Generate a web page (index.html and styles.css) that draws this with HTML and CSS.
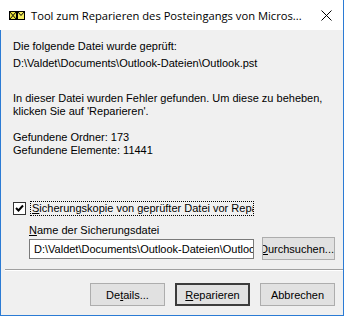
FILE: index.html
```html
<!DOCTYPE html>
<html lang="de">
<head>
<meta charset="utf-8">
<title>Tool zum Reparieren des Posteingangs</title>
<link rel="stylesheet" href="styles.css">
</head>
<body>
<div class="window">
  <div class="titlebar">
    <svg class="app-icon" width="16" height="10" viewBox="0 0 16 10">
      <rect x="0.5" y="0.5" width="7" height="8" fill="#e8e040" stroke="#000"/>
      <path d="M0.5 0.5 L4 4.5 L7.5 0.5 M0.5 8.5 L4 4.5 L7.5 8.5" fill="none" stroke="#000"/>
      <rect x="8.5" y="0.5" width="7" height="8" fill="#f4ec60" stroke="#000"/>
      <path d="M8.5 0.5 L12 4.5 L15.5 0.5" fill="none" stroke="#000"/>
    </svg>
    <span class="title">Tool zum Reparieren des Posteingangs von Micros...</span>
    <svg class="close" width="11" height="11" viewBox="0 0 11 11">
      <path d="M0.5 0.5 L10.5 10.5 M10.5 0.5 L0.5 10.5" stroke="#000" stroke-width="1" fill="none"/>
    </svg>
  </div>
  <div class="content">
    <div class="info">
      <p class="line">Die folgende Datei wurde geprüft:</p>
      <p class="line path-line">D:\Valdet\Documents\Outlook-Dateien\Outlook.pst</p>
      <p class="line para">In dieser Datei wurden Fehler gefunden. Um diese zu beheben, klicken Sie auf 'Reparieren'.</p>
      <p class="line stats">Gefundene Ordner: 173<br>Gefundene Elemente: 11441</p>
    </div>
    <div class="check-row">
      <span class="checkbox">
        <svg width="9" height="9" viewBox="0 0 9 9"><path d="M1 4 L3.5 6.5 L8 1.5" fill="none" stroke="#000" stroke-width="2"/></svg>
      </span>
      <span class="check-label"><u>S</u>icherungskopie von geprüfter Datei vor Repa</span>
    </div>
    <div class="backup">
      <div class="backup-label"><u>N</u>ame der Sicherungsdatei</div>
      <div class="backup-row">
        <div class="textbox">D:\Valdet\Documents\Outlook-Dateien\Outlook.pst</div>
        <div class="btn browse"><span><u>D</u>urchsuchen...</span></div>
      </div>
    </div>
    <div class="separator"></div>
    <div class="actions">
      <div class="btn">De<u>t</u>ails...</div>
      <div class="btn default"><u>R</u>eparieren</div>
      <div class="btn">Abbrechen</div>
    </div>
  </div>
</div>
</body>
</html>
```
FILE: styles.css
```css
* { box-sizing: border-box; }
html, body { margin: 0; padding: 0; }
body {
  width: 344px;
  height: 316px;
  overflow: hidden;
  background: #f0f0f0;
}
.window {
  width: 344px;
  height: 316px;
  display: flex;
  flex-direction: column;
  border: 1px solid #2b7bd4;
  border-top: none;
  background: #f0f0f0;
  font-family: "Liberation Sans", Arial, sans-serif;
  font-size: 11px;
  color: #000;
}
.titlebar {
  height: 30px;
  flex: none;
  margin: 0 -1px 0 -1px;
  padding: 0 11px 0 9px;
  background: #fff;
  display: flex;
  align-items: center;
  border-right: 1px solid #2b7bd4;
}
.app-icon { flex: none; margin-top: 1px; }
.title {
  margin-left: 6px;
  font-family: "Open Sans", "Noto Sans", sans-serif;
  font-size: 11.2px;
  color: #000;
  white-space: nowrap;
  flex: 1;
}
.close { flex: none; margin-top: 1px; }
.content {
  flex: 1;
  display: flex;
  flex-direction: column;
  padding: 10px 0 0 12px;
}
.info { padding-right: 12px; flex: none; }
.line { margin: 0; line-height: 13px; }
.path-line { margin-top: 4px; }
.para { margin-top: 22px; width: 318px; }
.stats { margin-top: 13px; }
.check-row {
  margin-top: 44px;
  display: flex;
  align-items: center;
  height: 15px;
  flex: none;
}
.checkbox {
  width: 13px;
  height: 13px;
  border: 1px solid #333;
  background: #fff;
  display: flex;
  align-items: center;
  justify-content: center;
  flex: none;
}
.check-label {
  margin-left: 4px;
  padding: 0 1px;
  border: 1px dotted #000;
  line-height: 13px;
  white-space: nowrap;
  width: 224px;
  overflow: hidden;
}
.backup { padding-left: 16px; margin-top: 8px; flex: none; }
.backup-label { line-height: 13px; }
.backup-row {
  display: flex;
  align-items: center;
  margin-top: 0;
  gap: 8px;
}
.textbox {
  width: 225px;
  height: 20px;
  background: #fff;
  border: 1px solid #7a7a7a;
  padding-left: 4px;
  line-height: 18px;
  white-space: nowrap;
  overflow: hidden;
}
.btn {
  width: 75px;
  height: 23px;
  flex: none;
  background: #e1e1e1;
  border: 1px solid #adadad;
  display: flex;
  align-items: center;
  justify-content: center;
  white-space: nowrap;
  overflow: hidden;
}
.browse { width: 73px; justify-content: flex-end; padding-right: 0; }
.browse span { flex: none; }
.separator {
  flex: none;
  margin: 9px 0 0 -8px;
  height: 2px;
  border-top: 1px solid #a0a0a0;
  border-bottom: 1px solid #fff;
}
.actions {
  display: flex;
  justify-content: flex-end;
  gap: 10px;
  padding-right: 8px;
  margin-top: 12px;
}
.btn.default {
  border: 2px solid #3c3c3c;
}
```
